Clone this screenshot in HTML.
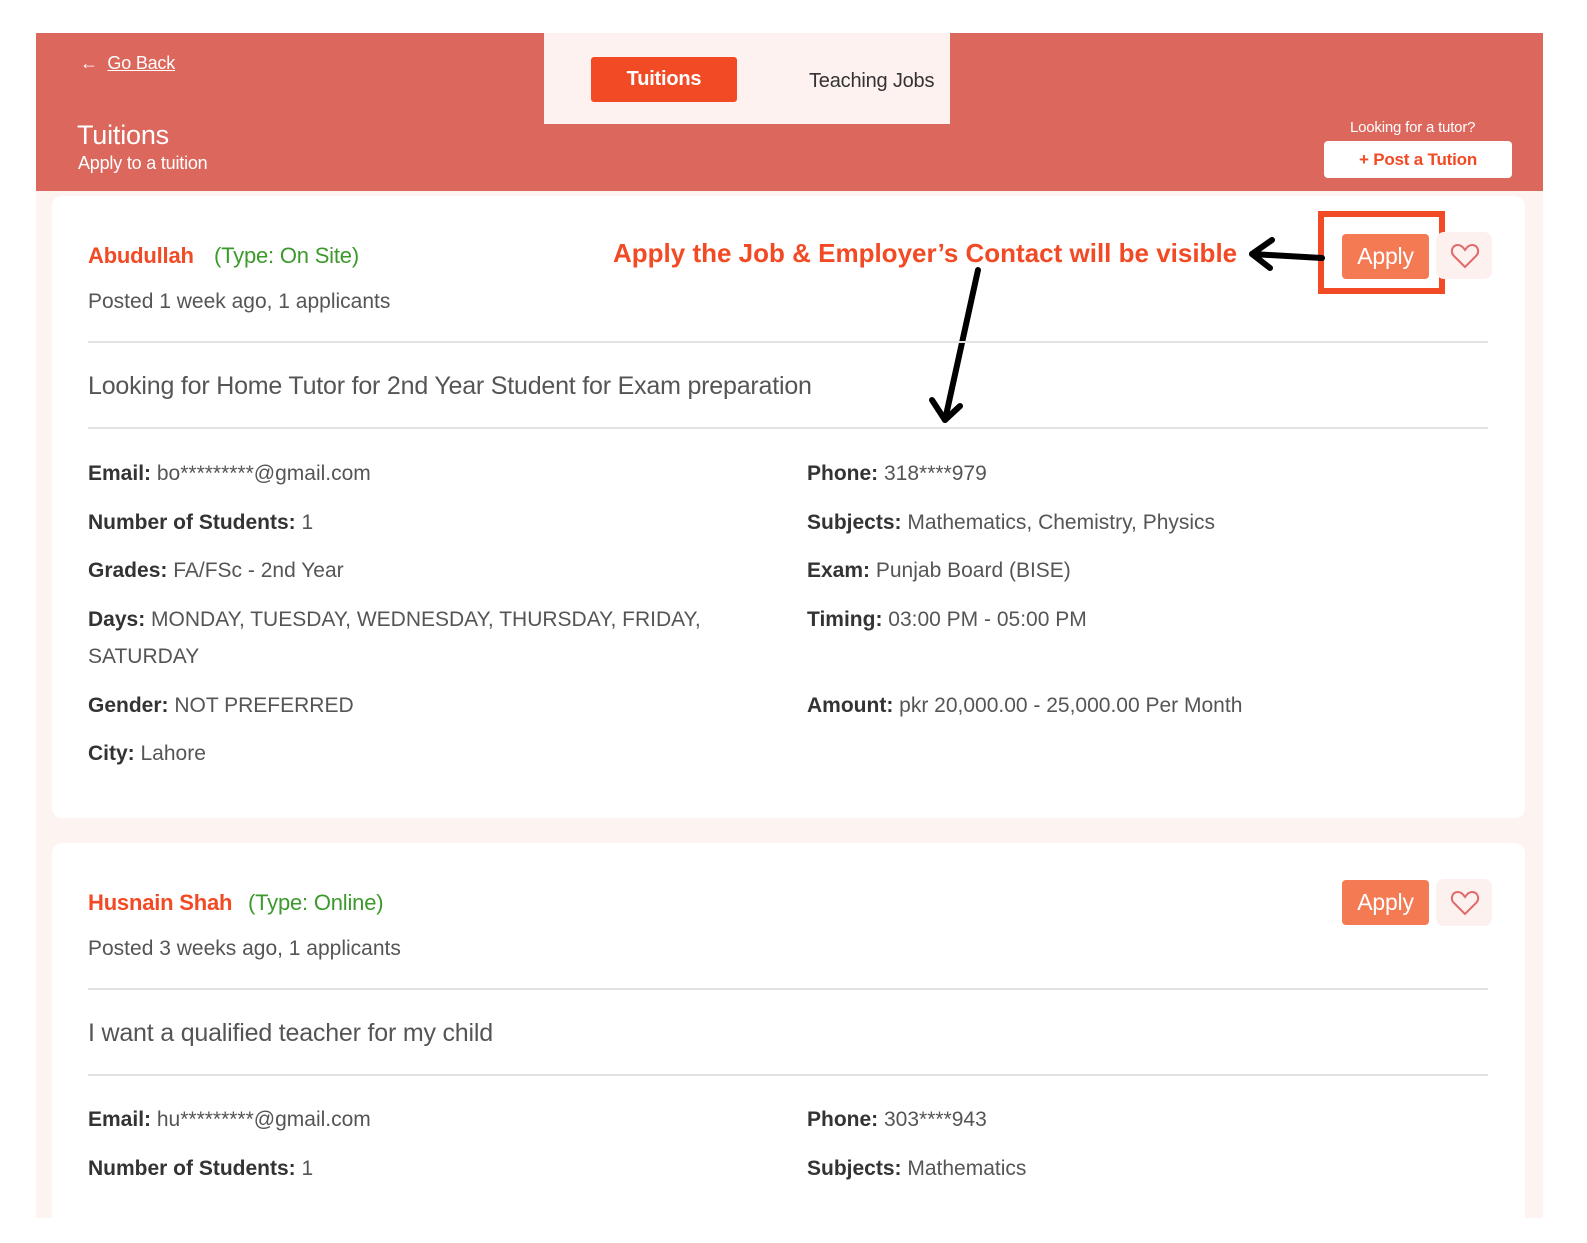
<!DOCTYPE html>
<html><head><meta charset="utf-8"><style>
*{margin:0;padding:0;box-sizing:border-box}
body{width:1587px;height:1218px;background:#fff;font-family:"Liberation Sans",sans-serif;position:relative;overflow:hidden;color:#555;letter-spacing:-0.2px}
.a{position:absolute;white-space:nowrap}
b{color:#333;font-weight:bold}
.hdr{position:absolute;left:36px;top:33px;width:1507px;height:158px;background:#dc675d}
.bg{position:absolute;left:36px;top:191px;width:1507px;height:1027px;background:#fdf3f1}
.card{position:absolute;left:52px;width:1473px;background:#fff;border-radius:10px}
.hr{position:absolute;left:88px;width:1400px;height:2px;background:#e2e2e2}
.f{font-size:21px;letter-spacing:0}
.btn{position:absolute;width:87px;height:45px;background:#f47a54;border-radius:4px;color:#fff;font-size:23px;text-align:center;line-height:45px}
.heart{position:absolute;width:56px;height:47px;background:#fdf1ef;border-radius:8px}
</style></head><body>
<div class="hdr"></div>
<div class="bg"></div>
<div class="a" style="left:544px;top:33px;width:406px;height:91px;background:#fdf2f0"></div>
<div class="a" style="left:591px;top:57px;width:146px;height:45px;background:#f24a25;border-radius:3px;color:#fff;font-size:20px;text-align:center;line-height:45px;font-weight:bold">Tuitions</div>
<div class="a" style="left:809px;top:70px;font-size:20px;color:#333">Teaching Jobs</div>
<div class="a" style="left:80px;top:53px;font-size:18px;color:#fff">&larr;&nbsp; <span style="text-decoration:underline">Go Back</span></div>
<div class="a" style="left:77px;top:120px;font-size:27px;color:#fff">Tuitions</div>
<div class="a" style="left:78px;top:153px;font-size:18px;color:#fff">Apply to a tuition</div>
<div class="a" style="left:1350px;top:119px;font-size:15px;color:#fff">Looking for a tutor?</div>
<div class="a" style="left:1324px;top:141px;width:188px;height:37px;background:#fff;border-radius:4px;color:#f24a25;font-size:17px;font-weight:bold;text-align:center;line-height:37px">+ Post a Tution</div>

<div class="card" style="top:196px;height:622px"></div>
<div class="card" style="top:843px;height:400px"></div>

<div class="a" style="left:88px;top:243px;font-size:22px;color:#f24a25;font-weight:bold">Abudullah</div>
<div class="a" style="left:214px;top:243px;font-size:22px;color:#3c9a2c">(Type: On Site)</div>
<div class="a f" style="left:88px;top:290px">Posted 1 week ago, 1 applicants</div>
<div class="a" style="left:613px;top:238px;font-size:26px;font-weight:bold;color:#f24a25;letter-spacing:0">Apply the Job &amp; Employer’s Contact will be visible</div>
<div class="a" style="left:1318px;top:211px;width:127px;height:83px;border:6px solid #f24a25"></div>
<div class="btn" style="left:1342px;top:234px">Apply</div>
<div class="heart" style="left:1436px;top:232px"></div>
<svg class="a" style="left:1450px;top:242px" width="30" height="28" viewBox="0 0 30 28"><path d="M15 25 L4 14 C0 10 2 3 8 3 C11 3 13 5 15 8 C17 5 19 3 22 3 C28 3 30 10 26 14 Z" fill="none" stroke="#e06a6a" stroke-width="2"/></svg>
<svg class="a" style="left:0;top:0" width="1587" height="440"><g stroke="#000" stroke-width="6" fill="none" stroke-linecap="round" stroke-linejoin="round"><path d="M1322 258 L1252 254"/><path d="M1272 240 L1252 254 L1270 268"/><path d="M978 270 L945 420"/><path d="M932 400 L945 420 L960 406"/></g></svg>

<div class="hr" style="top:341px"></div>
<div class="a" style="left:88px;top:372px;font-size:25px">Looking for Home Tutor for 2nd Year Student for Exam preparation</div>
<div class="hr" style="top:427px"></div>

<div class="a f" style="left:88px;top:462px"><b>Email:</b> bo*********@gmail.com</div>
<div class="a f" style="left:88px;top:511px"><b>Number of Students:</b> 1</div>
<div class="a f" style="left:88px;top:559px"><b>Grades:</b> FA/FSc - 2nd Year</div>
<div class="a f" style="left:88px;top:608px"><b>Days:</b> MONDAY, TUESDAY, WEDNESDAY, THURSDAY, FRIDAY,</div>
<div class="a f" style="left:88px;top:645px">SATURDAY</div>
<div class="a f" style="left:88px;top:694px"><b>Gender:</b> NOT PREFERRED</div>
<div class="a f" style="left:88px;top:742px"><b>City:</b> Lahore</div>
<div class="a f" style="left:807px;top:462px"><b>Phone:</b> 318****979</div>
<div class="a f" style="left:807px;top:511px"><b>Subjects:</b> Mathematics, Chemistry, Physics</div>
<div class="a f" style="left:807px;top:559px"><b>Exam:</b> Punjab Board (BISE)</div>
<div class="a f" style="left:807px;top:608px"><b>Timing:</b> 03:00 PM - 05:00 PM</div>
<div class="a f" style="left:807px;top:694px"><b>Amount:</b> pkr 20,000.00 - 25,000.00 Per Month</div>

<div class="a" style="left:88px;top:890px;font-size:22px;color:#f24a25;font-weight:bold">Husnain Shah</div>
<div class="a" style="left:248px;top:890px;font-size:22px;color:#3c9a2c">(Type: Online)</div>
<div class="a f" style="left:88px;top:937px">Posted 3 weeks ago, 1 applicants</div>
<div class="btn" style="left:1342px;top:880px">Apply</div>
<div class="heart" style="left:1436px;top:879px"></div>
<svg class="a" style="left:1450px;top:889px" width="30" height="28" viewBox="0 0 30 28"><path d="M15 25 L4 14 C0 10 2 3 8 3 C11 3 13 5 15 8 C17 5 19 3 22 3 C28 3 30 10 26 14 Z" fill="none" stroke="#e06a6a" stroke-width="2"/></svg>
<div class="hr" style="top:988px"></div>
<div class="a" style="left:88px;top:1019px;font-size:25px">I want a qualified teacher for my child</div>
<div class="hr" style="top:1074px"></div>
<div class="a f" style="left:88px;top:1108px"><b>Email:</b> hu*********@gmail.com</div>
<div class="a f" style="left:88px;top:1157px"><b>Number of Students:</b> 1</div>
<div class="a f" style="left:807px;top:1108px"><b>Phone:</b> 303****943</div>
<div class="a f" style="left:807px;top:1157px"><b>Subjects:</b> Mathematics</div>
</body></html>
